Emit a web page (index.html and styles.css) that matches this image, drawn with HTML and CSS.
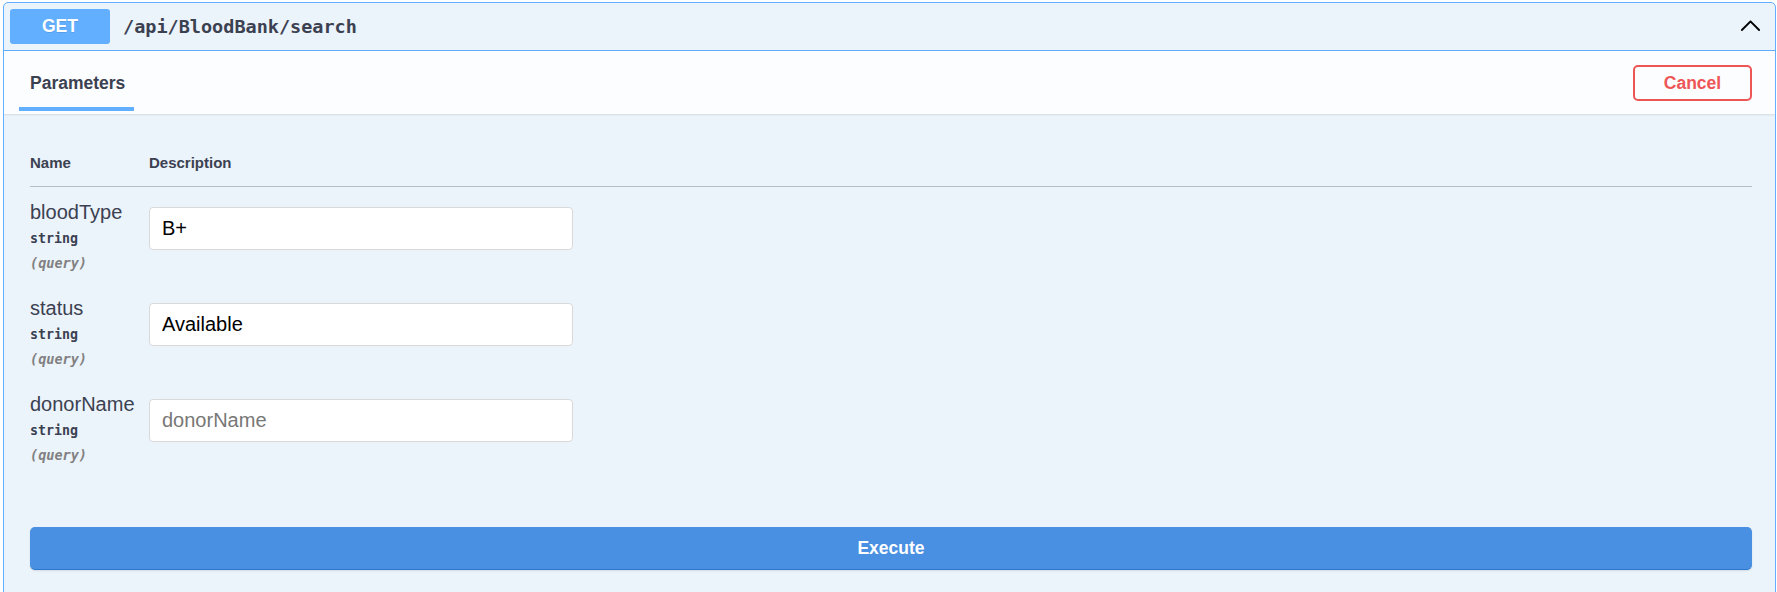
FILE: index.html
```html
<!DOCTYPE html>
<html lang="en">
<head>
<meta charset="utf-8">
<title>GET /api/BloodBank/search</title>
<link rel="stylesheet" href="styles.css">
</head>
<body>
<div class="opblock">
  <div class="summary">
    <span class="method">GET</span>
    <span class="path">/api/BloodBank/search</span>
    <svg class="arrow" width="25" height="25" viewBox="0 0 20 20" aria-hidden="true">
      <path d="M17.418 14.908c-.29.29-.76.29-1.050 0L10 8.539l-6.368 6.369c-.29.29-.76.29-1.05 0-.29-.29-.29-.76 0-1.05l6.893-6.893c.29-.29.76-.29 1.05 0l6.893 6.893c.29.29.29.76 0 1.050z"/>
    </svg>
  </div>
  <div class="section-header">
    <div class="tab">
      <span class="tab-label">Parameters</span>
      <span class="tab-line"></span>
    </div>
    <button class="btn-cancel">Cancel</button>
  </div>
  <div class="body">
    <div class="table-head">
      <span class="col-name">Name</span>
      <span class="col-desc">Description</span>
    </div>
    <div class="rows">
      <div class="row">
        <div class="col-name">
          <div class="p-name">bloodType</div>
          <div class="p-type">string</div>
          <div class="p-in">(query)</div>
        </div>
        <div class="col-desc">
          <input class="p-input" type="text" value="B+" placeholder="bloodType">
        </div>
      </div>
      <div class="row">
        <div class="col-name">
          <div class="p-name">status</div>
          <div class="p-type">string</div>
          <div class="p-in">(query)</div>
        </div>
        <div class="col-desc">
          <input class="p-input" type="text" value="Available" placeholder="status">
        </div>
      </div>
      <div class="row">
        <div class="col-name">
          <div class="p-name">donorName</div>
          <div class="p-type">string</div>
          <div class="p-in">(query)</div>
        </div>
        <div class="col-desc">
          <input class="p-input" type="text" value="" placeholder="donorName">
        </div>
      </div>
    </div>
    <button class="btn-execute">Execute</button>
  </div>
</div>
</body>
</html>
```

FILE: styles.css
```css
html, body {
  margin: 0;
  background: #ffffff;
}
body {
  padding: 2px 1px 0 3px;
  font-family: "Liberation Sans", Arial, sans-serif;
  color: #3b4151;
}
.opblock {
  border: 1px solid #61affe;
  border-radius: 5px;
  background: #ebf3fb;
  overflow: hidden;
}
.summary {
  display: flex;
  align-items: center;
  padding: 6px 0 6px 6px;
  border-bottom: 1px solid #61affe;
}
.method {
  display: block;
  width: 100px;
  height: 35px;
  line-height: 35px;
  text-align: center;
  background: #61affe;
  color: #ffffff;
  border-radius: 3px;
  font-weight: 700;
  font-size: 17.5px;
  text-shadow: 0 1px 0 rgba(0,0,0,.1);
}
.path {
  margin-left: 13px;
  font-family: "DejaVu Sans Mono", "Liberation Mono", monospace;
  font-weight: 700;
  font-size: 18.5px;
  color: #3b4151;
  flex: 1;
}
.arrow {
  margin: 0 12px 4px 0;
  fill: #000000;
}
.section-header {
  display: flex;
  justify-content: space-between;
  align-items: center;
  height: 63px;
  padding: 0 23px 0 15px;
  background: rgba(255,255,255,.8);
  box-shadow: 0 1px 2px rgba(0,0,0,.1);
  position: relative;
}
.tab {
  display: flex;
  flex-direction: column;
  justify-content: flex-end;
  align-self: stretch;
  width: 115px;
  padding-bottom: 3px;
  box-sizing: border-box;
}
.tab-label {
  padding-left: 11px;
  line-height: 20px;
  margin-bottom: 14px;
  font-size: 17.5px;
  font-weight: 700;
  color: #3b4151;
}
.tab-line {
  display: block;
  height: 4px;
  background: #61affe;
}
.btn-cancel {
  width: 119px;
  height: 36px;
  margin-top: 1px;
  border: 2px solid #ee5656;
  border-radius: 5px;
  background: transparent;
  color: #ee5656;
  font-family: "Liberation Sans", Arial, sans-serif;
  font-weight: 700;
  font-size: 17.5px;
  padding: 0;
}
.body {
  padding: 36px 23px 40px 26px;
}
.table-head {
  display: flex;
  line-height: 26px;
  padding-bottom: 10px;
  border-bottom: 1px solid rgba(59,65,81,.3);
  font-size: 15px;
  font-weight: 700;
}
.col-name {
  width: 119px;
  flex: none;
}
.col-desc {
  flex: 1;
}
.rows {
  padding-top: 14px;
  display: flex;
  flex-direction: column;
  gap: 26px;
}
.row {
  display: flex;
  height: 70px;
}
.p-name {
  font-size: 20px;
  line-height: 22px;
  color: #3b4151;
}
.p-type {
  padding-top: 8px;
  line-height: 16px;
  font-family: "DejaVu Sans Mono", "Liberation Mono", monospace;
  font-weight: 700;
  font-size: 13.3px;
  color: #3b4151;
}
.p-in {
  margin-top: 8px;
  line-height: 16px;
  font-family: "DejaVu Sans Mono", "Liberation Mono", monospace;
  font-style: italic;
  font-weight: 700;
  font-size: 13.5px;
  color: #808080;
}
.p-input {
  display: block;
  box-sizing: border-box;
  width: 424px;
  height: 43px;
  margin-top: 6px;
  padding: 0 12px 0 12px;
  border: 1px solid #d9d9d9;
  border-radius: 4px;
  background: #ffffff;
  font-family: "Liberation Sans", Arial, sans-serif;
  font-size: 20px;
  color: #000000;
  outline: none;
}
.p-input::placeholder {
  color: #777777;
}
.btn-execute {
  display: block;
  width: 100%;
  height: 43px;
  margin-top: 64px;
  padding: 0;
  border: 1px solid #4990e2;
  border-bottom-color: #2f78cf;
  border-radius: 5px;
  background: #4990e2;
  color: #ffffff;
  font-family: "Liberation Sans", Arial, sans-serif;
  font-weight: 700;
  font-size: 17.5px;
  box-shadow: 0 1px 2px rgba(0,0,0,.1);
}
```
